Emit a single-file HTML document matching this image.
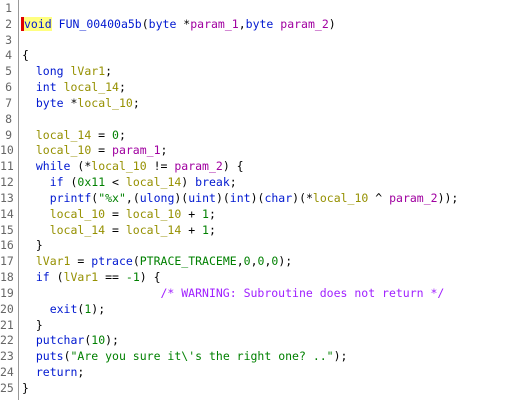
<!DOCTYPE html>
<html><head><style>
body{margin:0;width:523px;height:400px;background:#fff;overflow:hidden;position:relative;font-family:"DejaVu Sans Mono","Liberation Mono",monospace;font-size:11.5px;}
.g{position:absolute;left:18px;top:0;width:1px;height:400px;background:#999;}
.n{position:absolute;left:0;width:12px;text-align:right;color:#666;line-height:15.83px;}
.c{position:absolute;left:22px;white-space:pre;line-height:15.83px;color:#000;}
.k{color:#0018d0}.v{color:#959000}.p{color:#a000a0}.d{color:#008000}.s{color:#008000}.m{color:#a020ff}
.hl{background:#ffff80;border-left:3px solid #e00000;margin-left:-1px}
</style></head><body>
<div class="g"></div>
<div id="w"></div>
<script>
var L=[
'',
'<span class="hl"><span class="k">void</span></span> <span class="k">FUN_00400a5b</span>(<span class="k">byte</span> *<span class="p">param_1</span>,<span class="k">byte</span> <span class="p">param_2</span>)',
'',
'{',
'  <span class="k">long</span> <span class="v">lVar1</span>;',
'  <span class="k">int</span> <span class="v">local_14</span>;',
'  <span class="k">byte</span> *<span class="v">local_10</span>;',
'',
'  <span class="v">local_14</span> = <span class="d">0</span>;',
'  <span class="v">local_10</span> = <span class="p">param_1</span>;',
'  <span class="k">while</span> (*<span class="v">local_10</span> != <span class="p">param_2</span>) {',
'    <span class="k">if</span> (<span class="d">0x11</span> &lt; <span class="v">local_14</span>) <span class="k">break</span>;',
'    <span class="k">printf</span>(<span class="s">"%x"</span>,(<span class="k">ulong</span>)(<span class="k">uint</span>)(<span class="k">int</span>)(<span class="k">char</span>)(*<span class="v">local_10</span> ^ <span class="p">param_2</span>));',
'    <span class="v">local_10</span> = <span class="v">local_10</span> + <span class="d">1</span>;',
'    <span class="v">local_14</span> = <span class="v">local_14</span> + <span class="d">1</span>;',
'  }',
'  <span class="v">lVar1</span> = <span class="k">ptrace</span>(<span class="d">PTRACE_TRACEME</span>,<span class="d">0</span>,<span class="d">0</span>,<span class="d">0</span>);',
'  <span class="k">if</span> (<span class="v">lVar1</span> == <span class="d">-1</span>) {',
'                    <span class="m">/* WARNING: Subroutine does not return */</span>',
'    <span class="k">exit</span>(<span class="d">1</span>);',
'  }',
'  <span class="k">putchar</span>(<span class="d">10</span>);',
'  <span class="k">puts</span>(<span class="s">"Are you sure it\\\'s the right one? .."</span>);',
'  <span class="k">return</span>;',
'}'];
var h='';
for(var i=0;i<25;i++){var t=1+i*15.83;h+='<div class="n" style="top:'+t+'px">'+(i+1)+'</div><div class="c" style="top:'+t+'px">'+L[i]+'</div>';}
document.getElementById('w').innerHTML=h;
</script>
</body></html>
